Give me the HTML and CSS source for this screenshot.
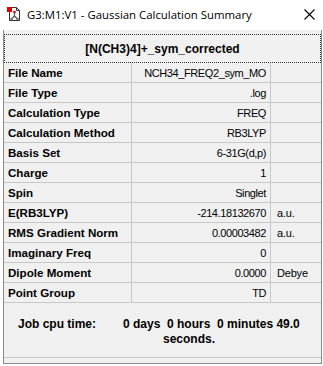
FILE: index.html
```html
<!DOCTYPE html>
<html lang="en">
<head>
    <meta charset="UTF-8">
    <title>G3:M1:V1 - Gaussian Calculation Summary</title>
    <link rel="stylesheet" href="styles.css">
</head>
<body>
    <div class="titlebar">
        <svg class="app-icon" width="16" height="16" viewBox="0 0 16 16">
            <path d="M3.5 1.5h7l3 3v10h-10z" fill="#fff" stroke="#333"/>
            <path d="M10.5 1.5v3h3" fill="none" stroke="#333"/>
            <rect x="1" y="1" width="5" height="5" fill="#e00000"/>
            <path d="M8.5 6v4M8.5 10l-3 3M8.5 10l3 3" stroke="#555" stroke-width="1.2" fill="none"/>
            <circle cx="8.5" cy="6" r="1.3" fill="#d00"/>
            <circle cx="5.5" cy="13" r="1.3" fill="#777"/>
            <circle cx="11.5" cy="13" r="1.3" fill="#777"/>
        </svg>
        <span class="title-text">G3:M1:V1 - Gaussian Calculation Summary</span>
        <span class="close-btn">
            <svg width="11" height="11" viewBox="0 0 11 11"><path d="M0.5 0.5l10 10M10.5 0.5l-10 10" stroke="#000" stroke-width="1.1"/></svg>
        </span>
    </div>

    <div class="panel">
        <div class="summary">
            <div class="summary-title">[N(CH3)4]+_sym_corrected</div>
            <div class="row"><div class="label">File Name</div><div class="value">NCH34_FREQ2_sym_MO</div><div class="unit"></div></div>
            <div class="row"><div class="label">File Type</div><div class="value">.log</div><div class="unit"></div></div>
            <div class="row"><div class="label">Calculation Type</div><div class="value">FREQ</div><div class="unit"></div></div>
            <div class="row"><div class="label">Calculation Method</div><div class="value">RB3LYP</div><div class="unit"></div></div>
            <div class="row"><div class="label">Basis Set</div><div class="value">6-31G(d,p)</div><div class="unit"></div></div>
            <div class="row"><div class="label">Charge</div><div class="value">1</div><div class="unit"></div></div>
            <div class="row"><div class="label">Spin</div><div class="value">Singlet</div><div class="unit"></div></div>
            <div class="row"><div class="label">E(RB3LYP)</div><div class="value">-214.18132670</div><div class="unit">a.u.</div></div>
            <div class="row"><div class="label">RMS Gradient Norm</div><div class="value">0.00003482</div><div class="unit">a.u.</div></div>
            <div class="row"><div class="label">Imaginary Freq</div><div class="value">0</div><div class="unit"></div></div>
            <div class="row"><div class="label">Dipole Moment</div><div class="value">0.0000</div><div class="unit">Debye</div></div>
            <div class="row"><div class="label">Point Group</div><div class="value">TD</div><div class="unit"></div></div>
        </div>
        <div class="cpu-time">
            <div class="cpu-label">Job cpu time:</div>
            <div class="cpu-value">0 days&nbsp; 0 hours&nbsp; 0 minutes 49.0<br><span class="cpu-seconds">seconds.</span></div>
        </div>
    </div>
</body>
</html>
```

FILE: styles.css
```css
* {
    margin: 0;
    padding: 0;
    box-sizing: border-box;
}

body {
    background: #fff;
    font-family: 'Liberation Sans', Arial, sans-serif;
    font-size: 12px;
    color: #000;
    width: 323px;
    height: 366px;
    overflow: hidden;
}

.titlebar {
    height: 30px;
    display: flex;
    align-items: center;
    padding: 0 5px 2px 6px;
    background: #fff;
}

.app-icon {
    flex-shrink: 0;
}

.title-text {
    flex: 1;
    margin-left: 5px;
    font-family: 'Open Sans', 'Liberation Sans', sans-serif;
    font-size: 11.4px;
    color: #000;
    white-space: nowrap;
}

.close-btn {
    display: flex;
    margin-right: 3px;
}

.panel {
    margin: 0 1px 0 3px;
    height: 334px;
    background: #f0f0f0;
    border-left: 1px solid #8c8c8c;
    border-right: 1px solid #8c8c8c;
    border-bottom: 1px solid #8c8c8c;
    padding-top: 4px;
    display: flex;
    flex-direction: column;
}

.summary-title {
    height: 29px;
    border: 1px dotted #333;
    display: flex;
    align-items: center;
    justify-content: center;
    font-weight: bold;
    font-size: 12px;
}

.row {
    display: grid;
    grid-template-columns: 128px 139px 1fr;
    height: 20px;
    border-bottom: 1px solid #c8c8c8;
}

.label,
.value,
.unit {
    display: flex;
    align-items: center;
    white-space: nowrap;
}

.label {
    padding-left: 4px;
    font-weight: bold;
    font-size: 11.6px;
    border-right: 1px solid #c8c8c8;
}

.value {
    justify-content: flex-end;
    padding-right: 4px;
    font-size: 11px;
    letter-spacing: -0.4px;
    border-right: 1px solid #c8c8c8;
}

.unit {
    padding-left: 6px;
    font-size: 11px;
    letter-spacing: -0.2px;
}

.cpu-time {
    flex: 1;
    display: flex;
    padding: 14px 0 0 14px;
    font-weight: bold;
    font-size: 12px;
    line-height: 15px;
    border-bottom: 1px solid #c8c8c8;
    margin-bottom: 5px;
}

.cpu-label {
    width: 105px;
}

.cpu-seconds {
    margin-left: 40px;
}
```
